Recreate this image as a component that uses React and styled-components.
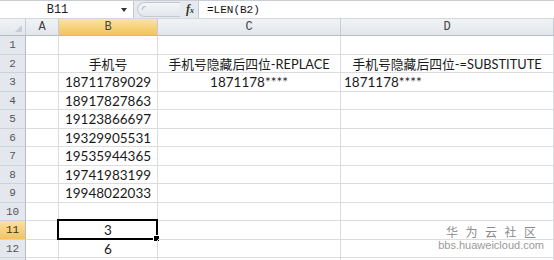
import React from 'react'
import styled, { createGlobalStyle, css } from 'styled-components'

const GlobalStyle = createGlobalStyle`
  html, body {
    margin: 0;
    padding: 0;
    background: #fff;
    overflow: hidden;
  }
`

const Page = styled.div`
  position: relative;
  width: 554px;
  height: 260px;
  overflow: hidden;
  font-family: Lato, 'Noto Sans CJK SC', sans-serif;
`

const FormulaBar = styled.div`
  display: flex;
  height: 17px;
  border-top: 1px solid #c9ced5;
  background: #e6eaef;
`

const NameBox = styled.div`
  display: flex;
  align-items: center;
  width: 133px;
  background: #fff;
  border-right: 1px solid #c3c9d1;
  font-family: 'Liberation Mono', monospace;
  font-size: 12px;
  color: #222;
`

const NameText = styled.span`
  width: 115px;
  text-align: center;
`

const DropArrow = styled.span`
  width: 0;
  height: 0;
  margin-left: 6px;
  border-left: 3px solid transparent;
  border-right: 3px solid transparent;
  border-top: 4px solid #333;
`

const Buttons = styled.div`
  display: flex;
  align-items: center;
  width: 64px;
  padding-left: 3px;
  box-sizing: border-box;
`

const Pill = styled.div`
  width: 42px;
  height: 13px;
  border: 1px solid #c4cad2;
  border-right: none;
  border-radius: 8px 0 0 8px;
  background: linear-gradient(#f4f6f8, #e2e6eb);
  position: relative;

  &::before {
    content: '';
    position: absolute;
    left: 4px;
    top: 3px;
    width: 3px;
    height: 3px;
    border-top: 1px solid #b9bfc7;
    border-left: 1px solid #b9bfc7;
    border-radius: 3px 0 0 0;
  }
`

const Fx = styled.span`
  margin-left: 6px;
  font-family: 'Liberation Serif', serif;
  font-style: italic;
  font-weight: bold;
  font-size: 12px;
  color: #333;

  small {
    font-size: 8px;
  }
`

const FormulaInput = styled.div`
  flex: 1;
  display: flex;
  align-items: center;
  padding-left: 8px;
  background: #fff;
  border-left: 1px solid #c3c9d1;
  font-family: 'Liberation Mono', monospace;
  font-size: 11px;
  color: #111;
`

const Sheet = styled.div`
  display: grid;
  grid-template-columns: 26px 33px 99px 183px 1fr;
  grid-template-rows: 18px repeat(6, 19px 18px) 18px;
`

const headerLook = css`
  display: flex;
  align-items: center;
  justify-content: center;
  box-sizing: border-box;
  font-family: 'Liberation Mono', monospace;
  font-size: 12px;
  color: #444;
`

const ColHead = styled.div`
  ${headerLook}
  border-top: 1px solid #d3d8de;
  border-right: 1px solid #c6ccd4;
  border-bottom: 1px solid #b4bcc6;
  background: ${(p) =>
    p.$active
      ? 'linear-gradient(#fbe3a4, #f2c35a)'
      : 'linear-gradient(#f1f3f6, #e2e6eb)'};
`

const Corner = styled(ColHead)`
  position: relative;

  &::after {
    content: '';
    position: absolute;
    right: 3px;
    bottom: 3px;
    border-left: 7px solid transparent;
    border-bottom: 7px solid #c9ced5;
  }
`

const RowHead = styled.div`
  ${headerLook}
  font-size: 11px;
  border-right: 1px solid #b4bcc6;
  border-bottom: 1px solid #cdd3da;
  background: ${(p) =>
    p.$active ? 'linear-gradient(#fbe0a0, #f2c45e)' : '#e4e8ee'};
  color: ${(p) => (p.$active ? '#3a3020' : '#555')};
`

const Cell = styled.div`
  position: relative;
  display: flex;
  align-items: center;
  justify-content: ${(p) => (p.$left ? 'flex-start' : 'center')};
  padding-left: ${(p) => (p.$left ? '3px' : '0')};
  box-sizing: border-box;
  border-right: 1px solid #dadcdf;
  border-bottom: 1px solid #dadcdf;
  font-size: 13.5px;
  color: #1a1a1a;
  white-space: nowrap;

  ${(p) =>
    p.$selected &&
    css`
      &::before {
        content: '';
        position: absolute;
        left: -2px;
        top: -2px;
        right: -1px;
        bottom: -1px;
        border: 2px solid #000;
      }
      &::after {
        content: '';
        position: absolute;
        right: -3px;
        bottom: -3px;
        width: 5px;
        height: 5px;
        background: #000;
        border: 1px solid #fff;
      }
    `}
`

const CjkText = styled.span`
  font-family: Lato, 'Noto Sans CJK SC', sans-serif;
  font-size: 12.8px;
`

const Watermark = styled.div`
  position: absolute;
  right: 10px;
  bottom: 9px;
  display: flex;
  flex-direction: column;
  align-items: center;
  gap: 2px;
  color: #8c8c8c;
`

const WatermarkTitle = styled.div`
  font-family: 'Noto Sans CJK SC', sans-serif;
  font-size: 12px;
  letter-spacing: 7.5px;
  margin-right: -7.5px;
  line-height: 12px;
`

const WatermarkUrl = styled.div`
  font-family: 'Liberation Sans', Arial, sans-serif;
  font-size: 11px;
  line-height: 11px;
  color: #9a9a9a;
`

const columns = ['A', 'B', 'C', 'D']

const rows = [
  {},
  {
    B: <CjkText>手机号</CjkText>,
    C: <CjkText>手机号隐藏后四位-REPLACE</CjkText>,
    D: <CjkText>手机号隐藏后四位-=SUBSTITUTE</CjkText>,
  },
  { B: '18711789029', C: '1871178****', D: '1871178****', dLeft: true },
  { B: '18917827863' },
  { B: '19123866697' },
  { B: '19329905531' },
  { B: '19535944365' },
  { B: '19741983199' },
  { B: '19948022033' },
  {},
  { B: '3', selected: true },
  { B: '6' },
]

export default function App() {
  return (
    <Page>
      <GlobalStyle />
      <FormulaBar>
        <NameBox>
          <NameText>B11</NameText>
          <DropArrow />
        </NameBox>
        <Buttons>
          <Pill />
          <Fx>
            f<small>x</small>
          </Fx>
        </Buttons>
        <FormulaInput>=LEN(B2)</FormulaInput>
      </FormulaBar>
      <Sheet>
        <Corner />
        {columns.map((c) => (
          <ColHead key={c} $active={c === 'B'}>
            {c}
          </ColHead>
        ))}
        {rows.map((row, i) => (
          <React.Fragment key={i}>
            <RowHead $active={i === 10}>{i + 1}</RowHead>
            {columns.map((c) => (
              <Cell
                key={c}
                $left={c === 'D' && row.dLeft}
                $selected={c === 'B' && row.selected}
              >
                {row[c]}
              </Cell>
            ))}
          </React.Fragment>
        ))}
        <RowHead />
        {columns.map((c) => (
          <Cell key={c} />
        ))}
      </Sheet>
      <Watermark>
        <WatermarkTitle>华为云社区</WatermarkTitle>
        <WatermarkUrl>bbs.huaweicloud.com</WatermarkUrl>
      </Watermark>
    </Page>
  )
}
